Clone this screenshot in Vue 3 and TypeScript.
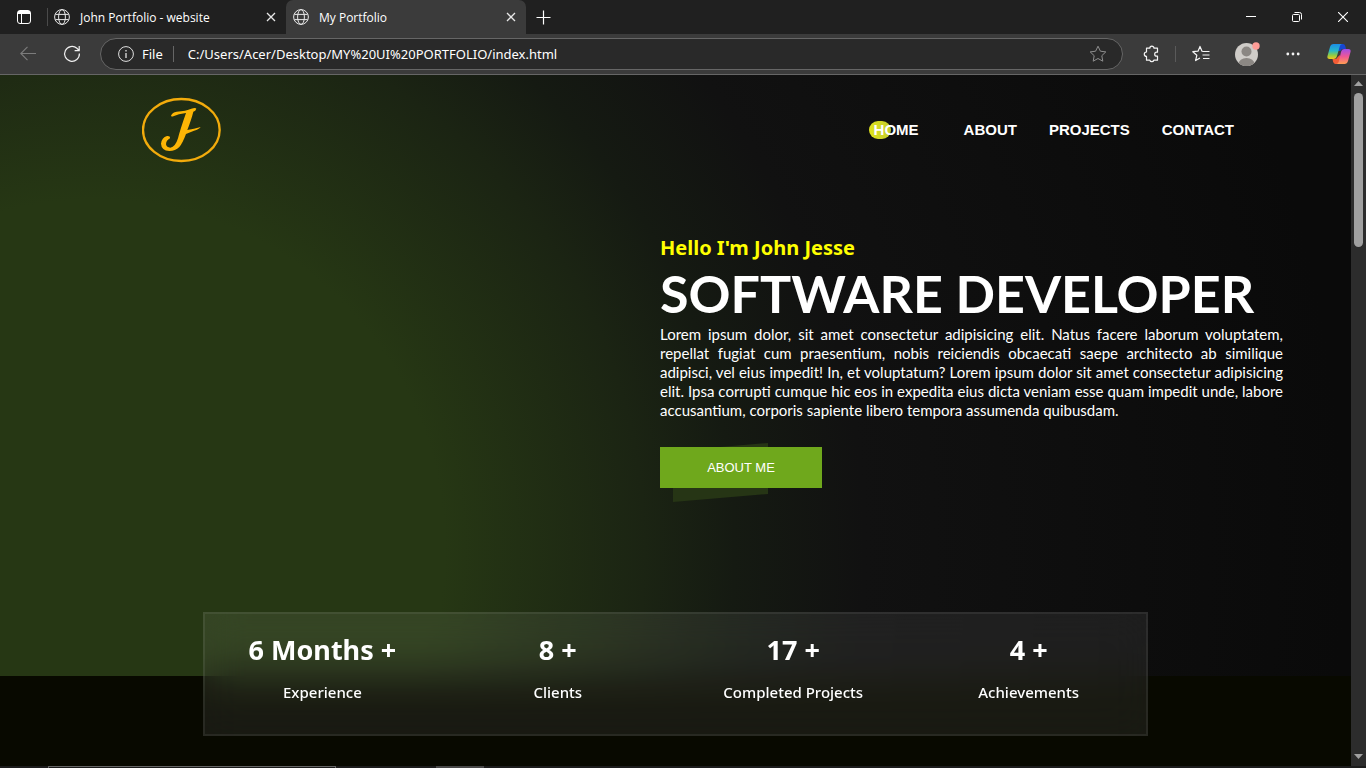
<script setup lang="ts">
import { ref } from 'vue'

interface Stat {
  value: string
  label: string
}

const address = ref<string>('C:/Users/Acer/Desktop/MY%20UI%20PORTFOLIO/index.html')

const tabs = [
  { title: 'John Portfolio - website', active: false },
  { title: 'My Portfolio', active: true },
]

const links = ['HOME', 'ABOUT', 'PROJECTS', 'CONTACT']

const bio = [
  'Lorem ipsum dolor, sit amet consectetur adipisicing elit. Natus facere laborum voluptatem,',
  'repellat fugiat cum praesentium, nobis reiciendis obcaecati saepe architecto ab similique',
  'adipisci, vel eius impedit! In, et voluptatum? Lorem ipsum dolor sit amet consectetur adipisicing',
  'elit. Ipsa corrupti cumque hic eos in expedita eius dicta veniam esse quam impedit unde, labore',
  'accusantium, corporis sapiente libero tempora assumenda quibusdam.',
]

const stats: Stat[] = [
  { value: '6 Months +', label: 'Experience' },
  { value: '8 +', label: 'Clients' },
  { value: '17 +', label: 'Completed Projects' },
  { value: '4 +', label: 'Achievements' },
]
</script>

<template>
  <div class="window">
    <div class="titlebar">
      <button class="workspace" aria-label="Tab actions">
        <svg width="16" height="16" viewBox="0 0 16 16" fill="none" stroke="#fff">
          <rect x="1.5" y="1.5" width="13" height="13" rx="2.5" />
          <path d="M2 3.5h12" stroke-width="3" />
          <path d="M5.5 5v9" />
        </svg>
      </button>
      <div v-for="tab in tabs" :key="tab.title" class="tab" :class="{ active: tab.active }">
        <svg width="16" height="16" viewBox="0 0 16 16" fill="none" stroke="#e8e8e8">
          <circle cx="8" cy="8" r="7.4" />
          <ellipse cx="8" cy="8" rx="3.4" ry="7.4" />
          <path d="M1.4 5.4h13.2M1.4 10.6h13.2" />
        </svg>
        <span class="tab-title">{{ tab.title }}</span>
        <button class="tab-close" aria-label="Close tab">
          <svg width="10" height="10" viewBox="0 0 10 10" stroke="#e8e8e8" stroke-width="1.3">
            <path d="M1 1l8 8M9 1l-8 8" />
          </svg>
        </button>
      </div>
      <button class="new-tab" aria-label="New tab">
        <svg width="15" height="15" viewBox="0 0 15 15" stroke="#fff" stroke-width="1.2">
          <path d="M7.5 .5v14M.5 7.5h14" />
        </svg>
      </button>
      <div class="window-controls">
        <button aria-label="Minimize">
          <svg width="10" height="10" viewBox="0 0 10 10" stroke="#fff"><path d="M0 4.5h10" /></svg>
        </button>
        <button aria-label="Restore">
          <svg width="10" height="10" viewBox="0 0 10 10" fill="none" stroke="#fff">
            <rect x=".5" y="2.5" width="7" height="7" rx="1" />
            <path d="M2.5 .5h5a2 2 0 0 1 2 2v5" />
          </svg>
        </button>
        <button aria-label="Close">
          <svg width="10" height="10" viewBox="0 0 10 10" stroke="#fff" stroke-width="1.1"><path d="M0 0l10 10M10 0L0 10" /></svg>
        </button>
      </div>
    </div>

    <div class="toolbar">
      <button class="tool" aria-label="Back">
        <svg width="16" height="16" viewBox="0 0 16 16" fill="none" stroke="#7c7c7c" stroke-width="1.1">
          <path d="M16 7.5H.8M7.5 .8L.8 7.5l6.7 6.7" />
        </svg>
      </button>
      <button class="tool" aria-label="Refresh">
        <svg width="18" height="18" viewBox="0 0 18 18" fill="none" stroke="#f0f0f0" stroke-width="1.2">
          <path d="M16.4 8.5a7.4 7.4 0 1 1-2.5-5.2L16 5.4M16.2 1v4.6h-4.6" />
        </svg>
      </button>
      <div class="address">
        <svg width="16" height="16" viewBox="0 0 16 16" fill="none" stroke="#e0e0e0">
          <circle cx="8" cy="8" r="7.4" />
          <path d="M8 7v5M8 4v1.4" stroke-width="1.3" />
        </svg>
        <label for="url" class="scheme">File</label>
        <input id="url" v-model="address" type="text" />
        <button class="star" aria-label="Add to favorites">
          <svg width="18" height="18" viewBox="0 0 18 18" fill="none" stroke="#8e8e8e" stroke-linejoin="round">
            <path d="M9 1.2l2.4 5 5.4.7-4 3.8 1 5.5L9 13.500l-4.800 2.700 1-5.500-4-3.800 5.400-.7z" />
          </svg>
        </button>
      </div>
      <div class="actions">
        <button class="tool extensions" aria-label="Extensions">
          <svg width="16" height="18" viewBox="0 0 16 18" fill="none" stroke="#f4f4f4" stroke-width="1.2" stroke-linejoin="round">
            <path d="M3.5 3.2h3.3a2.1 2.1 0 0 1 4.2 0h3.5v4h-.8a2 2 0 0 0 0 4h.8v4h-3.700a2.100 2.100 0 0 1-4 0H3.500v-3.800a2.200 2.200 0 0 1 0-4.400z" />
          </svg>
        </button>
        <button class="tool divided" aria-label="Favorites">
          <svg width="18" height="18" viewBox="0 0 18 18" fill="none" stroke="#f4f4f4" stroke-width="1.2" stroke-linejoin="round">
            <path d="M10.5 6.2H10L8 1.4 6 6.2l-5.2.5 4 3.6-1.200 5.300L8 12.900M10.500 6.500h7M10.500 10h7M11 13.500h6.500" />
          </svg>
        </button>
        <button class="tool" aria-label="Profile">
          <svg width="26" height="26" viewBox="0 0 26 26">
            <defs><clipPath id="avatar"><circle cx="12.5" cy="13.5" r="11.5" /></clipPath></defs>
            <circle cx="12.5" cy="13.5" r="11.5" fill="#cfccc8" />
            <g clip-path="url(#avatar)" fill="#8b8783">
              <circle cx="12.5" cy="10.5" r="5" />
              <ellipse cx="12.5" cy="23" rx="8" ry="6" />
            </g>
            <circle cx="22" cy="5" r="3.7" fill="#ff9d97" />
          </svg>
        </button>
        <button class="tool" aria-label="Settings and more">
          <svg width="14" height="4" viewBox="0 0 14 4" fill="#f4f4f4">
            <circle cx="1.8" cy="2" r="1.4" /><circle cx="7" cy="2" r="1.4" /><circle cx="12.2" cy="2" r="1.4" />
          </svg>
        </button>
        <button class="tool" aria-label="Copilot">
          <svg width="24" height="22" viewBox="0 0 24 22">
            <defs>
              <linearGradient id="cool" x1="0" y1="0" x2="0" y2="1">
                <stop offset="0" stop-color="#1b8de8" /><stop offset=".45" stop-color="#28b8c8" />
                <stop offset=".75" stop-color="#8fcb45" /><stop offset="1" stop-color="#f4c61c" />
              </linearGradient>
              <linearGradient id="warm" x1="0" y1="0" x2="0" y2="1">
                <stop offset="0" stop-color="#a04de8" /><stop offset=".5" stop-color="#ee5795" />
                <stop offset="1" stop-color="#ff9d52" />
              </linearGradient>
            </defs>
            <path d="M11 1h5q1.7 0 2.2 1.8L19 6h-3q-2 0-2.6 2L11 8z" fill="#1746d1" />
            <path d="M13 21H8.5q-1.7 0-2.3-2L5.5 16H8q2 0 2.7-2l2.3-2z" fill="#f35c36" />
            <path d="M6.5 1H15q-1.7.3-2.3 2.5L10 13q-.8 3-3.6 3H2.5q-2.8 0-2-3L3 4q.8-3 3.5-3z" fill="url(#cool)" />
            <path d="M17.5 6h4q2.8 0 2 3L21 18q-.8 3-3.5 3H9.5q1.7-.3 2.3-2.5L14 9q.8-3 3.5-3z" fill="url(#warm)" />
          </svg>
        </button>
      </div>
    </div>

    <div class="viewport">
      <div class="page">
        <section class="hero">
          <header class="site-header">
            <a href="#" aria-label="Home page">
              <svg class="logo" width="80" height="66" viewBox="66 36 240 198">
                <ellipse cx="184" cy="135" rx="115" ry="93" fill="none" stroke="#f2ab0c" stroke-width="7" />
                <path fill="#fdb505" d="M153 92Q157 82 170 80Q198 78 214 71Q227 67 229 71Q227 78 220 80Q215 101 202 135Q222 132 242 126Q238 133 222 137L198 147Q188 174 178 186Q166 198 148 198Q124 196 123 176Q125 158 141 153Q151 152 150 160Q138 166 138 178Q140 188 151 188Q166 186 174 160Q180 135 198 84Q175 86 160 94Q155 96 153 92Z" />
              </svg>
            </a>
            <nav>
              <a v-for="(link, i) in links" :key="link" href="#" :class="{ current: i === 0 }">{{ link }}</a>
            </nav>
          </header>
          <div class="intro">
            <h2>Hello I'm John Jesse</h2>
            <h1>SOFTWARE DEVELOPER</h1>
            <p class="bio"><span v-for="line in bio" :key="line">{{ line }}</span></p>
            <div class="cta"><button class="about-me">ABOUT ME</button></div>
          </div>
        </section>
        <section class="summary">
          <dl class="stats">
            <div v-for="stat in stats" :key="stat.label" class="stat">
              <dt>{{ stat.label }}</dt>
              <dd>{{ stat.value }}</dd>
            </div>
          </dl>
        </section>
      </div>
      <div class="scrollbar">
        <svg width="9" height="5" viewBox="0 0 9 5" fill="#a0a0a0"><path d="M4.5 0L9 5H0z" /></svg>
        <div class="thumb"></div>
        <svg class="down" width="9" height="5" viewBox="0 0 9 5" fill="#a0a0a0"><path d="M4.5 5L9 0H0z" /></svg>
      </div>
    </div>

    <div class="taskbar">
      <div class="search"></div>
      <div class="app"></div>
    </div>
  </div>
</template>

<style>
body {
  margin: 0;
  background: #080900;
}
</style>

<style scoped>
* {
  box-sizing: border-box;
}

.window {
  display: flex;
  flex-direction: column;
  height: 100vh;
  overflow: hidden;
  color: #fff;
  font-family: "Noto Sans", "Open Sans", sans-serif;
}

button {
  display: flex;
  align-items: center;
  justify-content: center;
  padding: 0;
  border: 0;
  background: none;
  color: inherit;
}

svg {
  display: block;
  flex: none;
}

.titlebar {
  display: flex;
  flex: none;
  height: 34px;
  background: #202020;
}

.workspace {
  width: 48px;
  border-right: 1px solid #4a4a4a;
  margin: 8px 0;
}

.tab {
  display: flex;
  align-items: center;
  width: 238px;
  padding: 0 10px 0 6px;
  font-size: 12px;
}

.tab.active {
  width: 240px;
  padding-left: 7px;
  border-radius: 7px 7px 0 0;
  background: #3b3b3b;
}

.tab-title {
  flex: 1;
  padding-left: 10px;
  font-family: "Open Sans", sans-serif;
  white-space: nowrap;
}

.new-tab {
  width: 34px;
}

.window-controls {
  display: flex;
  margin-left: auto;
}

.window-controls button {
  width: 46px;
}

.toolbar {
  display: flex;
  flex: none;
  align-items: center;
  height: 41px;
  padding: 0 4px 0 6px;
  border-bottom: 1px solid #666;
  background: #3b3b3b;
}

.tool {
  width: 44px;
  height: 32px;
}

.address {
  display: flex;
  flex: 1;
  align-items: center;
  height: 32px;
  margin-left: 6px;
  padding: 0 15px 0 17px;
  border: 1px solid #666;
  border-radius: 16px;
  background: #292929;
  font-family: "Noto Sans", sans-serif;
  font-size: 13px;
}

.scheme {
  margin-left: 8px;
  padding-right: 10px;
  border-right: 1px solid #666;
  line-height: 16px;
}

.address input {
  flex: 1;
  min-width: 0;
  padding: 0 0 0 14px;
  border: 0;
  outline: 0;
  background: none;
  color: #fff;
  font: inherit;
}

.actions {
  display: flex;
  margin-left: 4px;
}

.actions .tool {
  width: 46px;
}

.actions .extensions {
  width: 48px;
  margin-right: 3px;
}

.divided {
  position: relative;
}

.divided::before {
  content: "";
  position: absolute;
  top: 8px;
  left: -3px;
  width: 1px;
  height: 16px;
  background: #5a5a5a;
}

.viewport {
  display: flex;
  flex: 1;
  min-height: 0;
}

.page {
  display: flex;
  flex: 1;
  flex-direction: column;
  overflow: hidden;
}

.hero {
  flex: none;
  padding-bottom: 188px;
  background: radial-gradient(circle at 7% 79%, #263714 0, #263714 350px, #1b2413 550px, #151a12 640px, #111 770px, #0a0a0a 1250px);
}

.site-header {
  display: flex;
  align-items: center;
  justify-content: space-between;
  padding: 22px 117px 0 142px;
}

nav {
  display: flex;
  gap: 32px;
  font: bold 15px/20px "Liberation Sans", Arial, sans-serif;
}

nav a {
  color: #fff;
  text-decoration: none;
}

nav .current {
  margin-right: 13px;
  position: relative;
  z-index: 0;
}

.current::before {
  content: "";
  position: absolute;
  z-index: -1;
  top: 1px;
  left: -5px;
  width: 22px;
  height: 18px;
  border-radius: 9px;
  background: linear-gradient(90deg, #dfe21e, #c5cc2c);
}

.intro {
  margin: 72px 68px 0 660px;
}

h1,
h2,
p,
dl,
dd {
  margin: 0;
}

h2 {
  color: #ff0;
  font: bold 20px/26px "Noto Sans", sans-serif;
}

h1 {
  font: bold 52px/64px Lato, sans-serif;
  white-space: nowrap;
}

.bio {
  font: 15px/19px Lato, sans-serif;
}

.bio span {
  display: block;
  white-space: nowrap;
  text-align-last: justify;
}

.bio span:last-child {
  text-align-last: left;
}

.cta {
  position: relative;
  z-index: 0;
  width: 162px;
  margin-top: 27px;
}

.cta::before {
  content: "";
  position: absolute;
  z-index: -1;
  top: -4px;
  left: 13px;
  width: 95px;
  height: 59px;
  background: #263515;
  clip-path: polygon(0 8px, 100% 0, 100% 51px, 0 100%);
}

.about-me {
  width: 100%;
  height: 41px;
  background: #6fa81c;
  font: 13px "Liberation Sans", Arial, sans-serif;
}

.summary {
  flex: 1;
  background: #080900;
}

.stats {
  position: relative;
  display: grid;
  grid-template-columns: repeat(4, 1fr);
  width: 70%;
  margin: -64px auto 0;
  padding: 16px 0 28px;
  border: 2px solid rgba(255, 255, 255, 0.07);
  background: rgba(255, 255, 255, 0.07);
  backdrop-filter: blur(20px);
  text-align: center;
}

.stat {
  display: flex;
  flex-direction: column-reverse;
  gap: 8px;
}

dd {
  font: bold 27px/40px "Noto Sans", sans-serif;
}

dt {
  font: 500 15px/28px "Noto Sans", sans-serif;
}

.scrollbar {
  display: flex;
  flex: none;
  flex-direction: column;
  align-items: center;
  width: 15px;
  padding: 6px 0 7px;
  background: #2c2c2c;
}

.thumb {
  width: 9px;
  height: 154px;
  margin-top: 7px;
  border-radius: 5px;
  background: #a0a0a0;
}

.down {
  margin-top: auto;
}

.taskbar {
  display: flex;
  flex: none;
  height: 2px;
  padding-left: 48px;
  background: #1c1c1c;
}

.search {
  width: 288px;
  border: 1px solid #666;
  border-bottom: 0;
}

.app {
  width: 48px;
  margin-left: 100px;
  background: #484848;
}
</style>
